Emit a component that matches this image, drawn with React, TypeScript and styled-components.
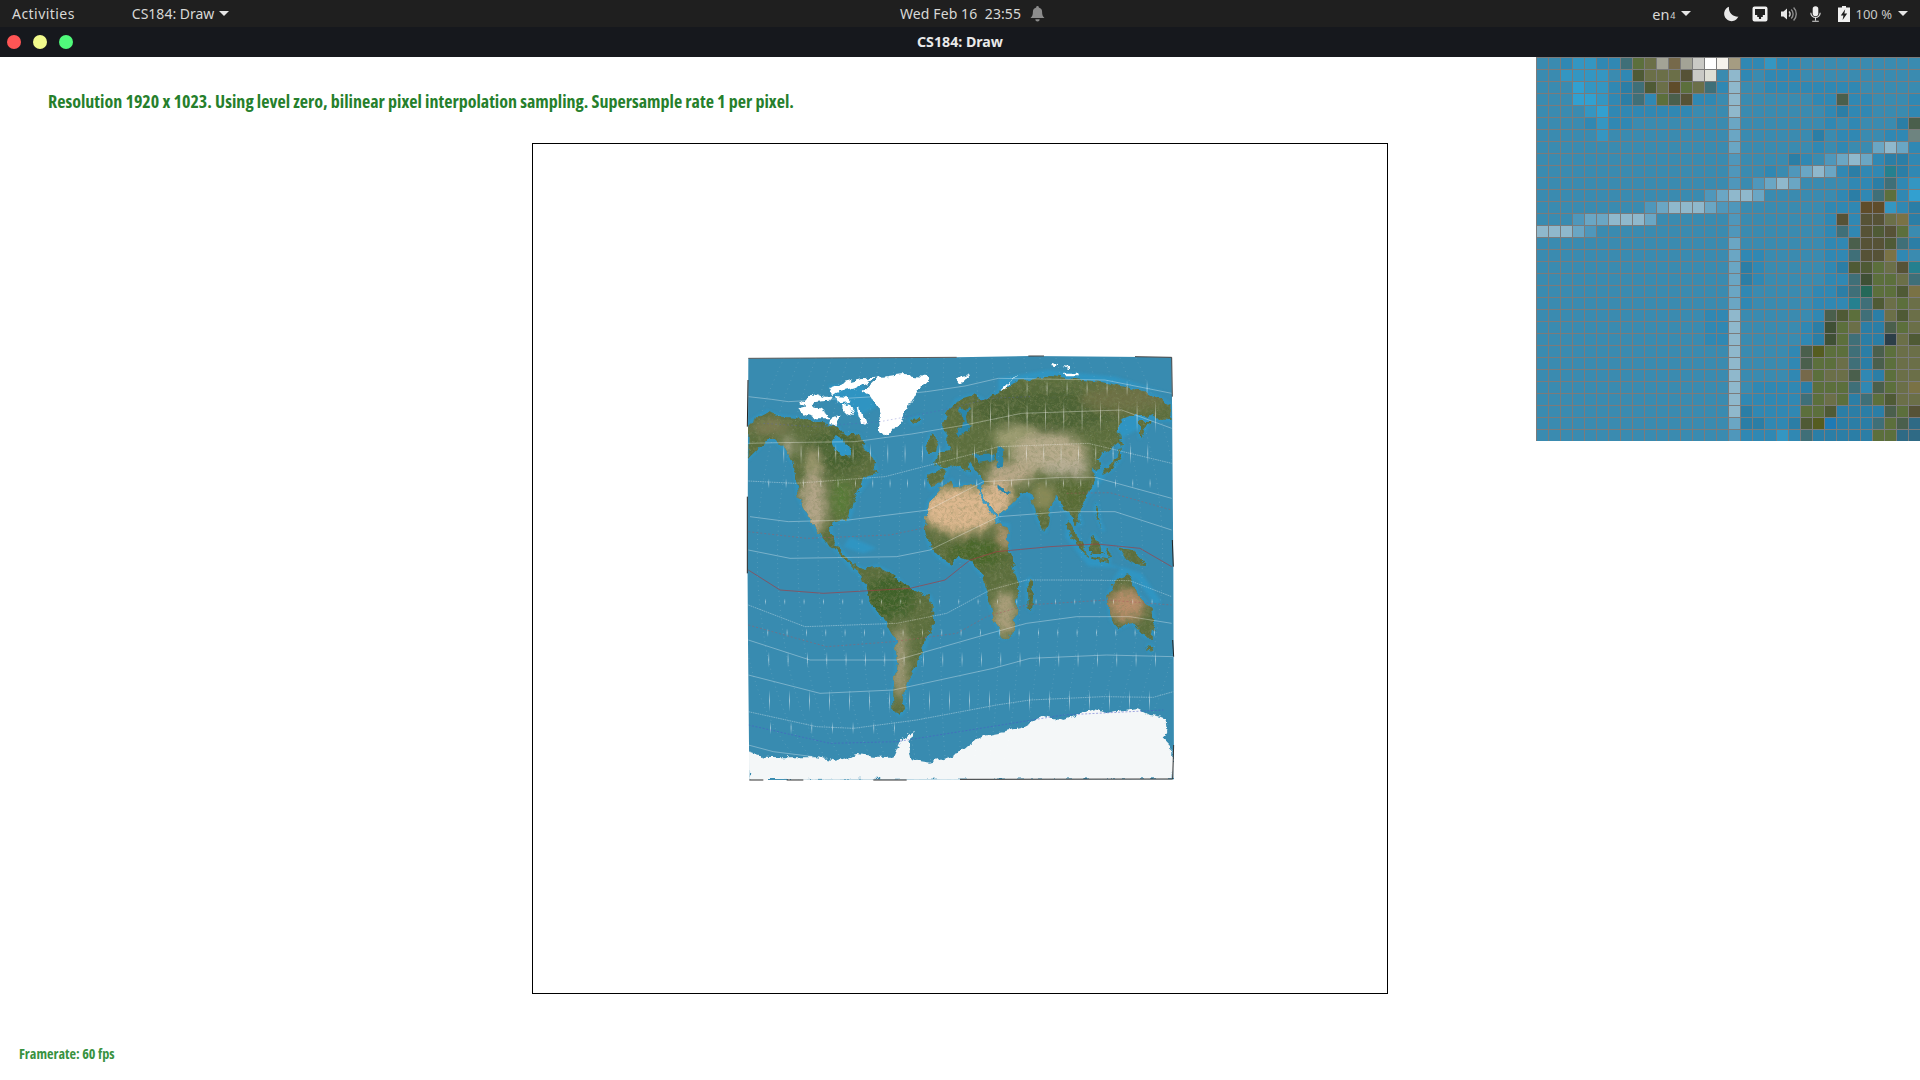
import React from "react";
import styled, { createGlobalStyle } from "styled-components";

const Global = createGlobalStyle`
  html, body { margin: 0; padding: 0; background: #fff; }
  #root { height: 100vh; }
`;

const Page = styled.div`
  width: 1920px; height: 1080px; display: flex; flex-direction: column; overflow: hidden;
  font-family: "Noto Sans", sans-serif;
`;
const TopBar = styled.header`
  height: 27px; background: #1f1f1f; color: #d8d8d6; font-size: 14px;
  display: grid; grid-template-columns: 900px 1fr auto; align-items: center; padding-right: 12px;
`;
const Left = styled.div`display: flex; align-items: center; padding-left: 12px; gap: 57px;`;
const Item = styled.span`display: inline-flex; align-items: center; gap: 5px; white-space: nowrap;`;
const Activities = styled(Item)`letter-spacing: .45px;`;
const Caret = styled.i`
  display: inline-block; width: 0; height: 0; border-left: 5px solid transparent; border-right: 5px solid transparent;
  border-top: 5px solid #e6e6e6;
`;
const Clock = styled.div`display: flex; align-items: center; gap: 9px; letter-spacing: .1px;`;
const Right = styled.div`display: flex; align-items: center;`;
const Lang = styled(Item)`margin-right: 32px; font-size: 14.5px; sub {font-size: 9px; vertical-align: baseline; margin-left: -4px; margin-top: 4px;}`;
const IconRow = styled.div`display: flex; align-items: center; gap: 13px; margin-right: 6px;`;
const Batt = styled(Item)`font-size: 13px; color: #c9c9c7; gap: 6px;`;

const TitleBar = styled.div`
  height: 30px; box-sizing: border-box; padding-bottom: 2px; background: #16181d; position: relative; display: flex; align-items: center; justify-content: center;
  color: #e9e9e9; font-size: 14.2px; font-weight: 700;
`;
const Dots = styled.div`position: absolute; left: 7px; top: 8px; display: flex; gap: 12px;`;
const Dot = styled.span<{ $c: string }>`width: 14px; height: 14px; border-radius: 50%; background: ${p => p.$c};`;

const Canvas = styled.main`position: relative; flex: 1; background: #fff; display: flex; flex-direction: column;`;
const Heading = styled.div`
  height: 86px; padding: 32px 0 0 48px; box-sizing: border-box; color: #267f2c;
  font-family: "Open Sans", sans-serif; font-weight: 700; font-stretch: 75%; font-size: 18px; line-height: 24px;
`;
const Frame = styled.div`
  width: 856px; height: 851px; margin: 0 auto; box-sizing: border-box; border: 1px solid #000;
  display: flex; align-items: center; justify-content: center;
`;
const Rate = styled.div`
  margin: 51px 0 0 19px; color: #38923f; font-family: "Open Sans", sans-serif; font-weight: 700; font-stretch: 75%;
  font-size: 14.2px; line-height: 18px;
`;
const Loupe = styled.svg`position: absolute; right: 0; top: 0; display: block;`;
const MapSvg = styled.svg`display: block; flex: none;`;

const pal: Record<string, string> = {
  a: "#3a8bb0", c: "#3088b3", b: "#3496c2", B: "#32a0d0", e: "#2b7ea6", l: "#8fb8cc", m: "#6aa6c4", n: "#4f97bb",
  g: "#5c6f3c", h: "#4f5a35", i: "#6b6f48", j: "#4a5f4c", k: "#3f6f78", p: "#565236", q: "#7a7245", r: "#2c3e48",
  s: "#a3a396", t: "#c9c9c5", u: "#ffffff", v: "#f5f2ec", w: "#a59c82", x: "#76694a", y: "#5f4c2a", z: "#dfdfd5",
  G: "#6e8480", T: "#25808f", D: "#3f5035", F: "#256858", O: "#555c20", E: "#1f7ab5", f: "#2f6a85",
};
const A = (n: number) => "a".repeat(n);
const rows: string[] = [
  "aacbbcckgisxstuvwccbcc" + A(10),
  "aabbbbachiiiptzalcaccc" + A(10),
  "aaaBbbcekhiygikclaa" + "cccccccc" + A(5),
  "aaaBBbcekcgjpccal" + "aaaaaacc" + "jccaaac",
  "aaaabBcccccccaaal" + "aaaaaaac" + "eccaaac",
  "aaaacbcc" + A(8) + "m" + A(7) + "cacaaaej",
  "aaaaab" + A(10) + "m" + A(6) + "eaccaaccG",
  A(16) + "m" + A(6) + "cacaamlmc",
  A(16) + "n" + A(4) + "ecanmlmceec",
  A(16) + "naacanmlmceccTec",
  A(16) + "nanmlmaaaaccekcb",
  A(14) + "nmllm" + A(6) + "ceckgcB",
  A(9) + "nmlllmnn" + A(7) + "cccyybce",
  "aaanmmlllm" + A(6) + "n" + A(7) + "cpcppiqe",
  "lllmn" + A(11) + "n" + A(7) + "ckcphpga",
  A(16) + "m" + A(7) + "ccjpphke",
  A(16) + "mcc" + A(5) + "cckppqca",
  A(16) + "mec" + A(5) + "cehhgipT",
  A(16) + "mec" + A(5) + "cckDggik",
  A(16) + "mc" + A(5) + "ccekFgghq",
  A(16) + "mc" + A(5) + "cccTkhigi",
  A(14) + "ccl" + A(6) + "cjhgkeihi",
  A(14) + "ccl" + A(5) + "ceDgieejgi",
  A(14) + "ccl" + A(5) + "ceDgkeerih",
  A(16) + "l" + A(4) + "cjOggkejgii",
  A(16) + "l" + A(4) + "cjggikejgii",
  A(16) + "l" + A(4) + "cxgiijcegii",
  A(16) + "lacccceggg" + "kcjgiq",
  A(16) + "lccccckgigekghii",
  A(16) + "leccccggheeeejgp",
  A(16) + "meecce" + "hOEeeekgjf",
  A(16) + "ncccbckeeeeeggff",
];

const Grid = () => (
  <Loupe width={384} height={384} viewBox="0 0 384 384">
    {rows.map((row, j) =>
      row.padEnd(32, "a").slice(0, 32).split("").map((ch, i) => (
        <rect key={i + "-" + j} x={i * 12 + 0.5} y={j * 12 + 0.5} width={12} height={12}
          fill={pal[ch] || pal.a} stroke="#7b7b7b" strokeWidth={1} />
      ))
    )}
  </Loupe>
);

/* author each outline in the coordinates of the crop it was read from */
const poly = (pts: string, dx = 0, dy = 0) =>
  "M" + pts.trim().split(/\s+/).map(p => {
    const [x, y] = p.split(",").map(Number);
    return `${x + dx} ${y + dy}`;
  }).join("L") + "Z";
const z7 = (p: string) => poly(p, 45, 30);
const z8 = (p: string) => poly(p, 675, 30);
const z10 = (p: string) => poly(p, 675, 675);

const land = [
  z7("10,220 30,205 65,185 110,200 160,205 200,215 240,225 275,230 290,250 305,255 320,250 340,255 365,300 385,330 395,370 355,385 345,405 330,440 320,480 310,510 290,510 262,520 255,540 270,575 295,610 330,655 325,660 300,630 265,590 235,570 210,530 185,490 160,440 155,400 150,350 120,300 90,270 65,270 45,290 10,325"),
  poly("370,675 405,690 440,678 480,700 530,740 600,770 608,800 605,860 590,905 565,960 530,1030 520,1080 525,1110 510,1125 490,1105 490,1050 500,980 498,900 470,850 430,800 415,760 400,720"),
  poly("595,490 630,450 665,420 670,440 700,435 745,440 760,480 790,530 800,550 835,555 830,610 850,680 865,730 860,800 850,880 820,895 795,840 775,770 760,710 720,660 680,650 660,675 625,650 600,620 585,560"),
  poly("640,382 612,370 625,340 655,330 655,300 640,265 650,225 680,180 730,165 770,185 810,150 870,125 960,108 1060,120 1110,125 1200,145 1280,170 1325,195 1325,240 1280,238 1250,225 1205,225 1170,240 1160,280 1170,300 1125,335 1095,360 1090,400 1095,420 1060,490 1045,520 1055,550 1040,555 1015,520 1000,505 980,470 960,500 945,575 925,540 905,470 880,455 850,490 800,530 775,490 755,470 760,420 730,380 715,370 720,400 690,380 665,370 650,385"),
  poly("592,405 640,385 650,395 620,440 600,445"),
  z7("540,290 560,250 575,285 570,305 550,310 545,300"),
  z7("495,210 525,200 525,215 505,222"),
  z8("340,510 355,535 385,590 400,620 390,615 350,560 335,530"),
  z8("345,550 390,600 400,622 370,595"),
  z8("415,555 435,585 440,612 410,612 405,580"),
  z8("410,620 465,630 462,636 408,626"),
  z8("450,590 465,620 458,625 446,600"),
  z8("425,460 435,520 445,540 430,505 420,480"),
  z8("490,590 530,600 572,642 545,640 510,620"),
  z8("495,295 500,320 470,360 445,372 455,350 485,330"),
  z8("495,250 505,290 498,292 490,260"),
  z8("420,320 440,345 430,365 410,340"),
  z8("555,210 585,210 570,240 555,262"),
  z10("475,60 510,25 530,35 550,90 590,130 598,160 590,215 570,215 530,170 490,190 470,165 457,95"),
  z10("578,240 592,245 585,262"),
  z10("215,50 225,40 232,100 228,135 218,125"),
];

const shallow = [
  z8("335,530 420,630 510,655 400,648 330,560"),
  z8("420,340 450,380 410,430 360,465 400,400"),
  z8("470,210 560,195 590,215 500,265"),
  z8("130,85 280,60 480,80 640,130 500,100 270,85 130,125"),
  z7("250,105 350,100 395,170 340,200 270,150"),
  z10("460,60 500,5 560,25 620,110 600,120 540,40 510,20"),
  z7("390,370 330,450 320,500 345,410"),
  poly("360,590 440,625 400,640 340,620"),
];

const inland = [
  z7("258,278 272,255 298,268 308,292 316,316 290,318 268,300"),
  poly("725,345 790,340 795,360 745,368"),
  poly("800,318 815,322 818,385 805,385 797,350"),
  poly("805,432 840,462 830,468 800,440"),
  poly("690,205 720,200 700,250 730,258 700,285 680,290 695,250"),
];

const patches: [number, number, number, number, string][] = [
  [950, 210, 220, 60, "#4e6435"], [1180, 175, 130, 40, "#6d7044"], [860, 295, 70, 40, "#9d9d72"],
  [960, 340, 110, 60, "#b7ab8c"], [840, 400, 70, 35, "#b8a788"], [1010, 385, 75, 22, "#b7ae96"],
  [1030, 460, 50, 55, "#586c34"], [940, 470, 35, 40, "#8a8a58"], [800, 480, 50, 55, "#d9b68f"],
  [690, 510, 115, 72, "#ddb88f"], [820, 590, 16, 45, "#c6a07c"], [740, 640, 90, 40, "#48662c"],
  [825, 820, 34, 70, "#ab9f7c"], [310, 340, 90, 60, "#496331"], [250, 370, 22, 45, "#a19b72"],
  [250, 490, 40, 95, "#b3a588"], [335, 480, 30, 60, "#597a38"], [480, 770, 70, 65, "#41622b"],
  [510, 970, 22, 115, "#a49b7a"], [1190, 795, 58, 48, "#b98e6a"], [660, 380, 40, 20, "#5b7340"],
  [120, 260, 60, 22, "#7d7a52"], [175, 320, 20, 30, "#a9a48a"],
];

const arctic = [
  z7("350,125 400,85 470,75 555,82 520,120 505,150 480,190 445,240 425,262 405,240 395,170 380,140"),
  z7("165,160 215,130 240,140 262,140 255,152 215,155 190,175"),
  z7("272,138 300,140 320,155 280,160"),
  z7("160,175 200,165 240,190 255,205 210,205 180,195"),
  z7("285,165 315,160 330,195 310,190"),
  z7("335,175 350,185 362,222 345,215"),
  z7("250,115 290,100 350,85 395,80 360,100 330,115 290,125 262,135"),
  z7("255,205 280,195 275,225 250,222"),
  z7("630,85 660,75 655,92 638,98"),
  z8("140,115 170,85 198,72 165,90 150,118"),
  z8("285,38 310,45 305,52 288,48"),
  z8("322,68 375,68 378,76 330,76"),
  z8("2,90 50,70 40,82 10,98"),
  z8("320,48 342,52 335,58"),
];

const antarctica = poly(
  "55,1235 100,1250 150,1252 260,1252 320,1262 380,1245 430,1250 490,1250 515,1195 555,1172 535,1205 545,1260 600,1268 680,1245 720,1210 760,1185 830,1172 880,1160 940,1128 1000,1140 1040,1125 1090,1108 1130,1118 1180,1110 1220,1105 1260,1125 1310,1135 1312,1170 1300,1200 1330,1232 1328,1318 58,1320"
);

const parallels = [
  "M55 170L125 178 175 185 435 170 590 155 705 138 805 115 1125 120 1325 160",
  "M55 310L145 308 375 305 545 282 705 255 875 220 1175 210 1325 265",
  "M55 423L195 430 465 410 705 348 805 320 1075 310 1325 370",
  "M60 530L175 545 355 540 595 510 760 425 995 412 1095 412 1325 475",
  "M55 630L180 655 500 650 600 630 805 530 1005 515 1155 515 1325 570",
  "M55 795L225 860 500 850 650 820 780 750 890 720 1040 720 1200 722 1325 770",
  "M55 900L240 960 500 960 780 880 890 850 1040 830 1200 830 1325 850",
  "M55 1005L270 1060 490 1050 790 985 900 955 1130 945 1330 950",
  "M55 1115L260 1160 370 1165 560 1140 800 1095 900 1080 1120 1070 1270 1072 1330 1055",
  "M55 1215L130 1235 250 1250",
];
const tickRows = [
  { y: 180, h: 100, x0: 725, n: 11, dx: 55 }, { y: 120, h: 50, x0: 890, n: 7, dx: 60 },
  { y: 310, h: 62, x0: 160, n: 22, dx: 52 }, { y: 415, h: 30, x0: 115, n: 23, dx: 52 },
  { y: 775, h: 20, x0: 105, n: 21, dx: 58 }, { y: 865, h: 26, x0: 112, n: 21, dx: 58 },
  { y: 935, h: 48, x0: 115, n: 21, dx: 58 }, { y: 1050, h: 65, x0: 117, n: 20, dx: 60 },
  { y: 1145, h: 38, x0: 120, n: 7, dx: 62 },
];
const meridians = Array.from({ length: 23 }, (_, i) => {
  const k = i - 11;
  return `M${690 + k * 48} 55 Q${690 + k * 64} 420 ${690 + k * 60} 800 T${690 + k * 38} 1320`;
});

const MapArt = () => (
  <MapSvg width={430} height={431} viewBox="45 39 1290 1293">
    <defs>
      <clipPath id="landClip">{land.map((d, i) => <path key={i} d={d} />)}</clipPath>
      <clipPath id="sheet"><path d="M55 55L680 52 900 48 1325 52 1330 680 1332 1318 700 1318 58 1320 52 700Z" /></clipPath>
      <filter id="soft" x="-20%" y="-20%" width="140%" height="140%"><feGaussianBlur stdDeviation="14" /></filter>
      <filter id="haze" x="-5%" y="-5%" width="110%" height="110%"><feGaussianBlur stdDeviation="5" /></filter>
      <filter id="rough" filterUnits="userSpaceOnUse" x="45" y="39" width="1300" height="1300">
        <feTurbulence type="fractalNoise" baseFrequency="0.035" numOctaves="4" seed="3" result="w" />
        <feDisplacementMap in="SourceGraphic" in2="w" scale="26" xChannelSelector="R" yChannelSelector="G" />
      </filter>
      <filter id="grain" filterUnits="userSpaceOnUse" x="45" y="39" width="1300" height="1300">
        <feTurbulence type="fractalNoise" baseFrequency="0.1" numOctaves="3" seed="7" result="n" />
        <feColorMatrix in="n" type="matrix" values="0 0 0 0 .2  0 0 0 0 .24  0 0 0 0 .1  1.2 0 0 0 -.5" result="s" />
        <feComposite in="s" in2="SourceAlpha" operator="in" result="c" />
        <feMerge><feMergeNode in="SourceGraphic" /><feMergeNode in="c" /></feMerge>
      </filter>
      <linearGradient id="tick" x1="0" y1="0" x2="0" y2="1">
        <stop offset="0" stopColor="#fff" stopOpacity="0" />
        <stop offset=".5" stopColor="#fff" stopOpacity=".6" />
        <stop offset="1" stopColor="#fff" stopOpacity="0" />
      </linearGradient>
    </defs>
    <g clipPath="url(#sheet)">
      <rect x="45" y="39" width="1300" height="1300" fill="#388bb0" />
      <g filter="url(#haze)" opacity=".6">
        {land.map((d, i) => <path key={i} d={d} fill="none" stroke="#2b9ccf" strokeWidth={10} strokeLinejoin="round" />)}
        {shallow.map((d, i) => <path key={i} d={d} fill="#2b9ccf" />)}
      </g>
      <g filter="url(#rough)">
        <g filter="url(#grain)">
          <g clipPath="url(#landClip)">
            <rect x="45" y="39" width="1300" height="1300" fill="#5c6e3e" />
            <g filter="url(#soft)">
              {patches.map(([cx, cy, rx, ry, f], i) => <ellipse key={i} cx={cx} cy={cy} rx={rx} ry={ry} fill={f} />)}
            </g>
          </g>
        </g>
        {inland.map((d, i) => <path key={i} d={d} fill={i === 0 ? "#2f96c6" : "#2c87ad"} />)}
        <path d="M750 462L805 548" stroke="#3f9cc4" strokeWidth={7} />
        {arctic.map((d, i) => <path key={i} d={d} fill="#fff" />)}
      </g>
      <g filter="url(#rough)"><path d={antarctica} fill="#f4f7f8" /></g>
      <path d="M55 1320L58 1235" stroke="#f4f7f8" strokeWidth={8} />
      <g fill="none" stroke="#fff" strokeWidth={1.8}>
        {meridians.map((d, i) => <path key={i} d={d} strokeDasharray="2 12" opacity=".35" />)}
        {parallels.map((d, i) => <path key={i} d={d} opacity=".55" strokeDasharray={i % 3 === 2 ? "5 2" : undefined} />)}
      </g>
      <g fill="none" strokeWidth={2}>
        <path d="M55 690L150 750 280 760 540 745 645 720 720 660 800 635 960 620 1100 612 1230 625 1325 680" stroke="#a23c42" />
        <path d="M55 575L230 595 480 585 600 560 M1010 460L1140 458 1325 510" stroke="#a8565f" strokeDasharray="6 6" opacity=".7" />
        <path d="M55 855L290 920 490 905 680 880 770 830 890 795 1130 780 1325 795" stroke="#a8565f" strokeDasharray="6 6" opacity=".7" />
        <path d="M55 1155L300 1210 500 1205 720 1170 1000 1125 1300 1110" stroke="#4a55c8" strokeDasharray="6 5" opacity=".75" />
        <path d="M100 250L250 260 450 245 640 210 780 175 900 170" stroke="#5a5fc0" strokeDasharray="5 7" opacity=".5" />
      </g>
      {tickRows.map(r => Array.from({ length: r.n }, (_, i) => (
        <rect key={r.y + "-" + i} x={r.x0 + i * r.dx} y={r.y} width={2.5} height={r.h} fill="url(#tick)" />
      )))}
    </g>
    <g fill="none" strokeWidth={3}>
      <path d="M55 55L680 52" stroke="#5a5a5a" />
      <path d="M895 48L942 48M1215 50L1325 52M1325 52L1327 170" stroke="#444" />
      <path d="M58 1320L100 1320M170 1320L220 1320M430 1320L530 1320M690 1318L1328 1317M1328 1317L1331 1215" stroke="#333" />
      <path d="M52 260L54 120M52 700L52 470M1330 680L1327 600M1331 950L1328 900" stroke="#222" />
    </g>
  </MapSvg>
);

const Ico = styled.svg`display: block; flex: none;`;
const BattIco = styled(Ico)`margin-left: 4px;`;
const Moon = () => (
  <Ico width={16} height={16} viewBox="0 0 16 16"><path fill="#e8e8e8" d="M6 .8A7.4 7.4 0 1 0 15.4 10.6 8.6 8.6 0 0 1 6 .8Z" /></Ico>
);
const Port = () => (
  <Ico width={16} height={16} viewBox="0 0 16 16">
    <path fill="#efefef" fillRule="evenodd" d="M2.5 0.5h11a2 2 0 0 1 2 2v11a2 2 0 0 1-2 2h-11a2 2 0 0 1-2-2v-11a2 2 0 0 1 2-2ZM3 3v6h2.2v2h1.7v2h2.2v-2h1.7v-2H13V3Z" />
  </Ico>
);
const Speaker = () => (
  <Ico width={16} height={16} viewBox="0 0 16 16">
    <path fill="#e8e8e8" d="M0 5.5h2.5L6 2.5v11l-3.5-3H0Z" />
    <path fill="none" stroke="#d8d8d8" strokeWidth="1.4" d="M8 5.5a3.4 3.4 0 0 1 0 5" />
    <path fill="none" stroke="#8f8f8f" strokeWidth="1.4" d="M10.2 3.6a6 6 0 0 1 0 8.8M12.6 1.6a9 9 0 0 1 0 12.8" />
  </Ico>
);
const Mic = () => (
  <Ico width={11} height={16} viewBox="0 0 11 16">
    <rect x="2.7" y="0.3" width="5.6" height="10" rx="2.8" fill="#eee" />
    <path fill="none" stroke="#ddd" strokeWidth="1.1" d="M.8 6.8a4.7 4.7 0 0 0 9.4 0M5.5 11.6v3M2.2 15.3h6.6" />
  </Ico>
);
const Battery = () => (
  <BattIco width={12} height={16} viewBox="0 0 12 16">
    <path fill="#f1f1f1" fillRule="evenodd" d="M4 0h4v1.5h4V16H0V1.5h4ZM7.2 3.2L2.8 9.4h2.6L4.6 14l4.6-6.4H6.4Z" />
  </BattIco>
);
const Bell = () => (
  <Ico width={15} height={16} viewBox="0 0 15 16">
    <path fill="#8c8c8c" d="M7.5 0a1.3 1.3 0 0 1 1.3 1.4 4.6 4.6 0 0 1 3.3 4.4c0 3.3.6 4.5 2.4 6.2H.5c1.8-1.7 2.4-2.9 2.4-6.2a4.6 4.6 0 0 1 3.3-4.4A1.3 1.3 0 0 1 7.5 0ZM5.3 13.2h4.4a2.2 2.2 0 0 1-4.4 0Z" />
  </Ico>
);

export default function App() {
  return (
    <Page>
      <Global />
      <TopBar>
        <Left>
          <Activities>Activities</Activities>
          <Item>CS184: Draw <Caret /></Item>
        </Left>
        <Clock><span>Wed Feb 16&nbsp;&nbsp;23:55</span><Bell /></Clock>
        <Right>
          <Lang>en<sub>4</sub><Caret /></Lang>
          <IconRow><Moon /><Port /><Speaker /><Mic /><Battery /></IconRow>
          <Batt>100 % <Caret /></Batt>
        </Right>
      </TopBar>
      <TitleBar>
        <Dots><Dot $c="#ff5555" /><Dot $c="#f1fa8c" /><Dot $c="#50fa7b" /></Dots>
        CS184: Draw
      </TitleBar>
      <Canvas>
        <Heading>Resolution 1920 x 1023. Using level zero, bilinear pixel interpolation sampling. Supersample rate 1 per pixel.</Heading>
        <Frame><MapArt /></Frame>
        <Rate>Framerate: 60 fps</Rate>
        <Grid />
      </Canvas>
    </Page>
  );
}
